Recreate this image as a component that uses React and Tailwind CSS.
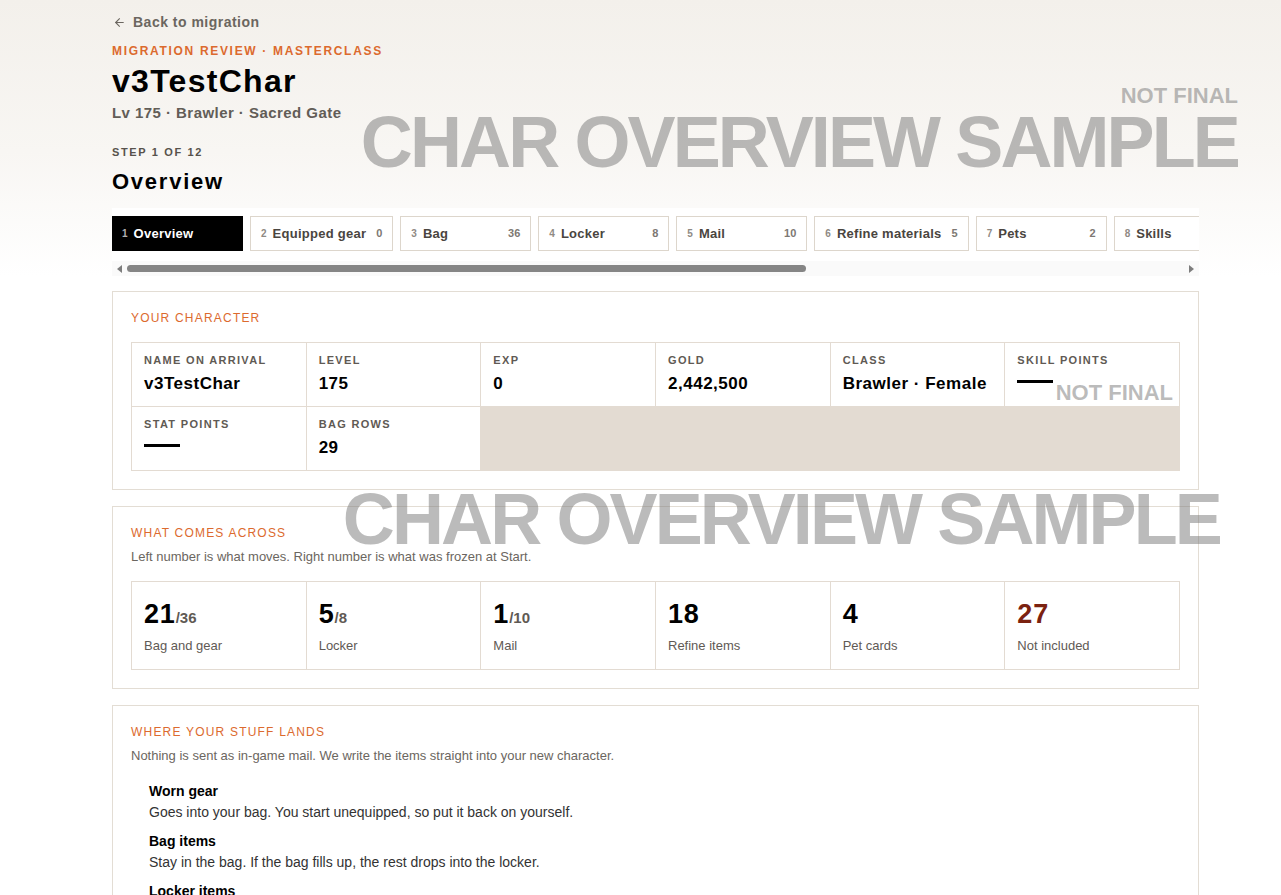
import React from "react";
import { ArrowLeft } from "lucide-react";

const steps = [
  { n: 1, label: "Overview" },
  { n: 2, label: "Equipped gear", count: 0 },
  { n: 3, label: "Bag", count: 36 },
  { n: 4, label: "Locker", count: 8 },
  { n: 5, label: "Mail", count: 10 },
  { n: 6, label: "Refine materials", count: 5 },
  { n: 7, label: "Pets", count: 2 },
  { n: 8, label: "Skills" },
  { n: 9, label: "Titles" },
  { n: 10, label: "Quests" },
  { n: 11, label: "Friends" },
  { n: 12, label: "Confirm" },
];

const character = [
  { label: "Name on arrival", value: "v3TestChar" },
  { label: "Level", value: "175" },
  { label: "Exp", value: "0" },
  { label: "Gold", value: "2,442,500" },
  { label: "Class", value: "Brawler · Female" },
  { label: "Skill points", value: null },
  { label: "Stat points", value: null },
  { label: "Bag rows", value: "29" },
];

const across = [
  { value: "21", of: "36", label: "Bag and gear" },
  { value: "5", of: "8", label: "Locker" },
  { value: "1", of: "10", label: "Mail" },
  { value: "18", label: "Refine items" },
  { value: "4", label: "Pet cards" },
  { value: "27", label: "Not included", warn: true },
];

const lands = [
  { title: "Worn gear", text: "Goes into your bag. You start unequipped, so put it back on yourself." },
  { title: "Bag items", text: "Stay in the bag. If the bag fills up, the rest drops into the locker." },
  { title: "Locker items", text: "Go straight into your locker, in the same order." },
  { title: "Mail", text: "Unread attachments are moved into the locker too." },
];

function SectionLabel({ children }) {
  return (
    <div className="text-[12px] leading-4 tracking-[0.1em] uppercase text-[#dc6a2e]">
      {children}
    </div>
  );
}

function Dash() {
  return <span className="relative -top-[3px] inline-block w-9 h-[3px] bg-black align-middle" />;
}

function StepTab({ step, active }) {
  if (active) {
    return (
      <div className="shrink-0 min-w-[131px] h-[35px] flex items-center gap-[6px] px-[10px] bg-black">
        <span className="text-[10px] font-bold text-white/70">{step.n}</span>
        <span className="text-[13px] font-bold tracking-[0.02em] text-white">{step.label}</span>
      </div>
    );
  }
  return (
    <div className="shrink-0 min-w-[131px] h-[35px] flex items-center gap-[6px] px-[10px] bg-white border border-[#ddd6cc]">
      <span className="text-[10px] font-bold text-[#8f8a84]">{step.n}</span>
      <span className="flex-1 text-[13px] font-bold tracking-[0.02em] text-[#4a4540] whitespace-nowrap">
        {step.label}
      </span>
      {step.count !== undefined && (
        <span className="ml-1 text-[11px] font-bold text-[#7d7873]">{step.count}</span>
      )}
    </div>
  );
}

// scroll track under the step strip (native one is hidden in the capture)
function StripScrollbar() {
  return (
    <div className="h-[15px] bg-[#fafafa] flex items-center">
      <div className="w-[15px] flex justify-center">
        <span className="w-0 h-0 border-y-[4px] border-y-transparent border-r-[5px] border-r-[#7d7d7d]" />
      </div>
      <div className="flex-1 h-full flex items-center">
        <div className="w-[679px] h-[7px] rounded-full bg-[#858585]" />
      </div>
      <div className="w-[15px] flex justify-center">
        <span className="w-0 h-0 border-y-[4px] border-y-transparent border-l-[5px] border-l-[#7d7d7d]" />
      </div>
    </div>
  );
}

export default function App() {
  return (
    <div className="relative min-h-screen bg-white font-['Liberation_Sans',Arial,sans-serif] text-black">
      {/* header */}
      <div className="bg-[linear-gradient(180deg,#f3f0eb_0%,#f8f6f3_55%,#ffffff_100%)]">
        <div className="ml-[112px] w-[1087px] pt-[13px]">
          <div className="flex items-center gap-[7px] text-[14px] leading-[18px] font-bold tracking-[0.035em] text-[#6b6660]">
            <ArrowLeft size={13} strokeWidth={2} className="ml-[1px]" />
            Back to migration
          </div>
          <div className="mt-3 text-[12px] leading-4 font-bold tracking-[0.14em] uppercase text-[#dc6a2e]">
            Migration review · Masterclass
          </div>
          <h1 className="mt-1 text-[32px] leading-9 font-bold tracking-[0.04em]">v3TestChar</h1>
          <div className="mt-0.5 text-[15px] leading-6 font-semibold tracking-[0.03em] text-[#625d57]">
            Lv 175 · Brawler · Sacred Gate
          </div>
          <div className="mt-[19px] text-[11px] leading-4 font-bold tracking-[0.15em] uppercase text-[#57524c]">
            Step 1 of 12
          </div>
          <h2 className="mt-1.5 text-[22px] leading-8 font-extrabold tracking-[0.08em]">Overview</h2>

          <div className="mt-2.5 bg-white">
            <div className="pt-2 pb-[10px] overflow-x-auto [scrollbar-width:none]">
              <div className="flex gap-[7px] w-max">
                {steps.map((s) => (
                  <StepTab key={s.n} step={s} active={s.n === 1} />
                ))}
              </div>
            </div>
            <StripScrollbar />
          </div>
        </div>
      </div>

      {/* body */}
      <div className="ml-[112px] w-[1087px] mt-[15px] pb-10 flex flex-col gap-4">
        <section className="border border-[#e3ddd4] bg-white px-[18px] pt-[18px] pb-[18px]">
          <SectionLabel>Your character</SectionLabel>
          <div className="mt-4 grid grid-cols-6 gap-px bg-[#e3dbd2] border border-[#e3dbd2]">
            {character.map((c) => (
              <div key={c.label} className="bg-white px-3 pt-[9px] pb-[10px]">
                <div className="text-[11px] leading-4 font-bold tracking-[0.12em] uppercase text-[#5f5a54]">
                  {c.label}
                </div>
                <div className="mt-1 text-[17px] leading-6 font-bold tracking-[0.03em]">
                  {c.value === null ? <Dash /> : c.value}
                </div>
              </div>
            ))}
          </div>
        </section>

        <section className="border border-[#e3ddd4] bg-white px-[18px] pt-[18px] pb-[18px]">
          <SectionLabel>What comes across</SectionLabel>
          <p className="mt-1.5 text-[13px] leading-5 text-[#6b6660]">
            Left number is what moves. Right number is what was frozen at Start.
          </p>
          <div className="mt-3.5 grid grid-cols-6 gap-px bg-[#e3dbd2] border border-[#e3dbd2]">
            {across.map((a) => (
              <div key={a.label} className="bg-white px-3 pt-4 pb-[13px]">
                <div className="leading-8 font-bold">
                  <span className={`text-[27px] tracking-[0.03em] ${a.warn ? "text-[#7b2210]" : "text-black"}`}>
                    {a.value}
                  </span>
                  {a.of && <span className="text-[15px] text-[#5f5a54]">/{a.of}</span>}
                </div>
                <div className="mt-[2px] text-[13px] leading-5 font-medium text-[#5f5a55]">{a.label}</div>
              </div>
            ))}
          </div>
        </section>

        <section className="border border-[#e3ddd4] bg-white px-[18px] pt-[18px] pb-[18px]">
          <SectionLabel>Where your stuff lands</SectionLabel>
          <p className="mt-1.5 text-[13px] leading-5 text-[#6b6660]">
            Nothing is sent as in-game mail. We write the items straight into your new character.
          </p>
          <div className="mt-[15px] pl-[18px] flex flex-col gap-[9px]">
            {lands.map((l) => (
              <div key={l.title}>
                <div className="text-[14px] leading-5 font-bold">{l.title}</div>
                <div className="mt-px text-[14px] leading-5 text-[#333333]">{l.text}</div>
              </div>
            ))}
          </div>
        </section>
      </div>

      {/* watermarks */}
      <div className="pointer-events-none absolute left-0 top-[85px] w-[1238px] text-right text-[22px] leading-none font-bold text-[#787878]/50">
        NOT FINAL
      </div>
      <div className="pointer-events-none absolute left-0 top-[106px] w-[1238px] text-right text-[72px] leading-none font-bold tracking-[-0.04em] text-[#787878]/50 whitespace-nowrap">
        CHAR OVERVIEW SAMPLE
      </div>
      <div className="pointer-events-none absolute left-0 top-[382px] w-[1173px] text-right text-[22px] leading-none font-bold text-[#787878]/50">
        NOT FINAL
      </div>
      <div className="pointer-events-none absolute left-0 top-[483px] w-[1220px] text-right text-[72px] leading-none font-bold tracking-[-0.04em] text-[#787878]/50 whitespace-nowrap">
        CHAR OVERVIEW SAMPLE
      </div>
    </div>
  );
}
